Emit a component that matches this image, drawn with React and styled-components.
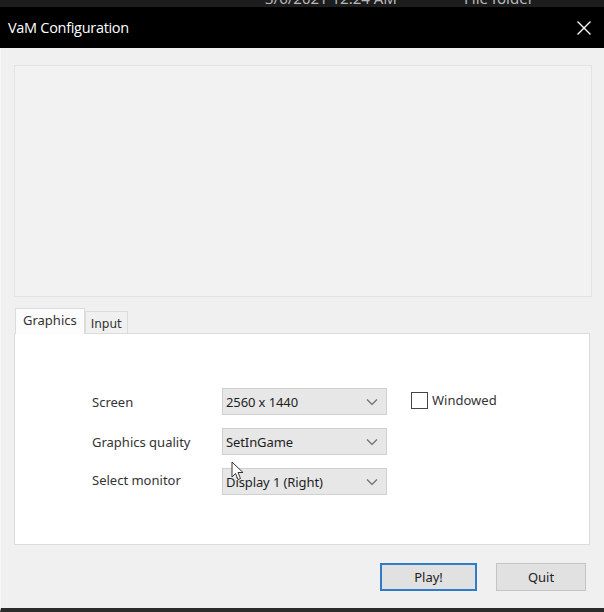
import React from "react";
import styled, { createGlobalStyle } from "styled-components";

const Global = createGlobalStyle`
  html, body { margin: 0; padding: 0; }
  body { width: 604px; height: 612px; overflow: hidden; background: #f0f0f0; }
  * { box-sizing: border-box; }
`;

const Window = styled.div`
  position: relative;
  width: 604px;
  height: 612px;
  display: flex;
  flex-direction: column;
  font-family: "Noto Sans", "Open Sans", sans-serif;
  background: #f0f0f0;
`;

const BackStrip = styled.div`
  height: 7px;
  background: #1d1d1d;
  overflow: hidden;
  display: flex;
  color: #b9b9b9;
  font-size: 15px;
  line-height: 18px;
`;

const BackText = styled.span`
  margin-top: -11px;
  margin-left: ${(p) => p.$left}px;
  white-space: nowrap;
`;

const TitleBar = styled.div`
  height: 41px;
  background: #000;
  display: flex;
  align-items: center;
  justify-content: space-between;
  padding: 0 12px 0 8px;
  color: #fff;
`;

const Title = styled.span`
  font-family: "Open Sans", "Noto Sans", sans-serif;
  font-size: 14.5px;
  letter-spacing: -0.3px;
`;

const Body = styled.div`
  flex: 1;
  display: flex;
  flex-direction: column;
  padding: 17px 12px 0 13px;
  border-left: 1px solid #f7f7f7;
  border-bottom: 4px solid #2b2b2b;
`;

const Banner = styled.div`
  height: 232px;
  background: #f2f2f2;
  border: 1px solid #e4e4e4;
`;

const TabsWrap = styled.div`
  margin-top: 10px;
  display: flex;
  flex-direction: column;
`;

const TabRow = styled.div`
  display: flex;
  align-items: flex-end;
  height: 26px;
  padding-left: 1px;
`;

const Tab = styled.div`
  height: ${(p) => (p.$active ? 26 : 22)}px;
  padding: ${(p) => (p.$active ? "0 7px 3px" : "3px 5px 0")};
  display: flex;
  align-items: center;
  color: #333;
  background: ${(p) => (p.$active ? "#fcfcfc" : "#f0f0f0")};
  border: 1px solid #dcdcdc;
  border-bottom: none;
  margin-bottom: ${(p) => (p.$active ? -1 : 0)}px;
  position: relative;
  font-family: ${(p) => (p.$active ? '"Noto Sans", sans-serif' : '"DejaVu Sans", sans-serif')};
  font-size: ${(p) => (p.$active ? 13 : 12)}px;
`;

const TabPanel = styled.div`
  height: 212px;
  background: #fff;
  border: 1px solid #dcdcdc;
  margin-right: 2px;
  padding: 54px 0 0 77px;
  display: grid;
  grid-template-columns: 130px 165px auto;
  grid-auto-rows: 27px;
  row-gap: 13px;
  align-content: start;
  align-items: center;
`;

const Label = styled.span`
  font-size: 13px;
  color: #333;
  margin-top: ${(p) => p.$shift || 0}px;
`;

const Select = styled.div`
  height: 27px;
  background: #e7e7e7;
  border: 1px solid #d0d0d0;
  display: flex;
  align-items: center;
  justify-content: space-between;
  padding: 0 8px 0 3px;
  font-size: 13px;
  letter-spacing: -0.1px;
  color: #1e1e1e;
`;

const CheckWrap = styled.label`
  display: flex;
  align-items: center;
  gap: 4px;
  margin-left: 24px;
  margin-top: -3px;
  font-size: 13px;
  color: #333;
`;

const Box = styled.span`
  width: 17px;
  height: 17px;
  border: 1px solid #444;
  background: #fff;
`;

const Footer = styled.div`
  display: flex;
  justify-content: flex-end;
  gap: 19px;
  padding: 18px 6px 0 0;
`;

const Button = styled.div`
  width: ${(p) => p.$w}px;
  height: 28px;
  display: flex;
  align-items: center;
  justify-content: center;
  font-size: 13px;
  color: #222;
  background: #e1e1e1;
  border: ${(p) => (p.$primary ? "2px solid #2f7dc9" : "1px solid #c4c4c4")};
`;

const Cursor = styled.svg`
  position: absolute;
  left: 231px;
  top: 461px;
`;

const Chevron = () => (
  <svg width="12" height="8" viewBox="0 0 12 8">
    <path d="M1 1.5 L6 6.5 L11 1.5" fill="none" stroke="#6b6b6b" strokeWidth="1.2" />
  </svg>
);

export default function App() {
  return (
    <>
      <Global />
      <Window>
        <BackStrip>
          <BackText $left={265}>3/6/2021 12:24 AM</BackText>
          <BackText $left={67}>File folder</BackText>
        </BackStrip>
        <TitleBar>
          <Title>VaM Configuration</Title>
          <svg width="16" height="16" viewBox="0 0 16 16">
            <path d="M1.5 1.5 L14.5 14.5 M14.5 1.5 L1.5 14.5" stroke="#fff" strokeWidth="1.4" />
          </svg>
        </TitleBar>
        <Body>
          <Banner />
          <TabsWrap>
            <TabRow>
              <Tab $active>Graphics</Tab>
              <Tab>Input</Tab>
            </TabRow>
            <TabPanel>
              <Label>Screen</Label>
              <Select>
                <span>2560 x 1440</span>
                <Chevron />
              </Select>
              <CheckWrap>
                <Box />
                Windowed
              </CheckWrap>
              <Label>Graphics quality</Label>
              <Select>
                <span>SetInGame</span>
                <Chevron />
              </Select>
              <span />
              <Label $shift={-4}>Select monitor</Label>
              <Select>
                <span>Display 1 (Right)</span>
                <Chevron />
              </Select>
              <span />
            </TabPanel>
          </TabsWrap>
          <Footer>
            <Button $w={97} $primary>Play!</Button>
            <Button $w={90}>Quit</Button>
          </Footer>
        </Body>
        <Cursor width="13" height="20" viewBox="0 0 13 20">
          <path d="M1 1 L1 16 L4.5 12.5 L7 18.5 L9.5 17.5 L7 11.5 L12 11.5 Z" fill="#fff" stroke="#333" strokeWidth="1" strokeLinejoin="round" />
        </Cursor>
      </Window>
    </>
  );
}
